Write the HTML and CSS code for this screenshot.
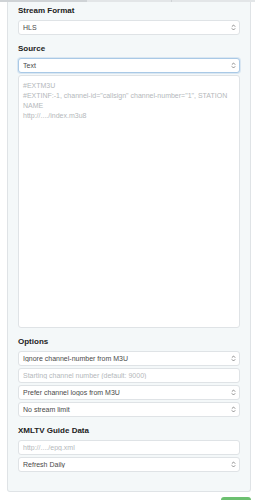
FILE: index.html
```html
<!DOCTYPE html>
<html lang="en">
<head>
    <meta charset="UTF-8">
    <meta name="viewport" content="width=device-width, initial-scale=1.0">
    <title>Source Settings</title>
    <link rel="stylesheet" href="styles.css">
</head>
<body>
    <div class="tabs">
        <span class="tab active"></span>
        <span class="tab"></span>
        <span class="tab last"></span>
    </div>
    <div class="panel">
        <div class="group">
            <label class="label">Stream Format</label>
            <div class="select-wrap">
                <select class="control">
                    <option>HLS</option>
                </select>
                <svg class="caret" viewBox="0 0 6 8"><path d="M1 3 L3 1 L5 3 M1 5 L3 7 L5 5" fill="none" stroke="currentColor" stroke-width="1"/></svg>
            </div>
        </div>
        <div class="group">
            <label class="label">Source</label>
            <div class="select-wrap">
                <select class="control focused">
                    <option>Text</option>
                </select>
                <svg class="caret" viewBox="0 0 6 8"><path d="M1 3 L3 1 L5 3 M1 5 L3 7 L5 5" fill="none" stroke="currentColor" stroke-width="1"/></svg>
            </div>
            <textarea class="control playlist" placeholder="#EXTM3U&#10;#EXTINF:-1, channel-id=&quot;callsign&quot; channel-number=&quot;1&quot;, STATION NAME&#10;http://..../index.m3u8"></textarea>
        </div>
        <div class="group">
            <label class="label">Options</label>
            <div class="select-wrap">
                <select class="control">
                    <option>Ignore channel-number from M3U</option>
                </select>
                <svg class="caret" viewBox="0 0 6 8"><path d="M1 3 L3 1 L5 3 M1 5 L3 7 L5 5" fill="none" stroke="currentColor" stroke-width="1"/></svg>
            </div>
            <input class="control" type="text" placeholder="Starting channel number (default: 9000)">
            <div class="select-wrap">
                <select class="control">
                    <option>Prefer channel logos from M3U</option>
                </select>
                <svg class="caret" viewBox="0 0 6 8"><path d="M1 3 L3 1 L5 3 M1 5 L3 7 L5 5" fill="none" stroke="currentColor" stroke-width="1"/></svg>
            </div>
            <div class="select-wrap">
                <select class="control">
                    <option>No stream limit</option>
                </select>
                <svg class="caret" viewBox="0 0 6 8"><path d="M1 3 L3 1 L5 3 M1 5 L3 7 L5 5" fill="none" stroke="currentColor" stroke-width="1"/></svg>
            </div>
        </div>
        <div class="group">
            <label class="label">XMLTV Guide Data</label>
            <input class="control" type="text" placeholder="http://..../epg.xml">
            <div class="select-wrap">
                <select class="control">
                    <option>Refresh Daily</option>
                </select>
                <svg class="caret" viewBox="0 0 6 8"><path d="M1 3 L3 1 L5 3 M1 5 L3 7 L5 5" fill="none" stroke="currentColor" stroke-width="1"/></svg>
            </div>
        </div>
    </div>
    <div class="footer">
        <button class="save-button"></button>
    </div>
</body>
</html>
```

FILE: styles.css
```css
:root {
    --panel-bg: #f4f8f9;
    --border-color: #dfe3e6;
    --text-color: #4a4a4a;
    --label-color: #222;
    --placeholder: #b4b8bb;
    --focus-color: #a9c9e6;
    --accent-color: #6cc070;
}

body {
    margin: 0;
    background-color: #fff;
    font-family: "Liberation Sans", Arial, sans-serif;
    color: var(--text-color);
}

.tabs {
    display: flex;
    height: 2px;
}

.tab {
    flex: 1;
    background-color: #e3e6e8;
}

.tab.active {
    flex: 0 0 87px;
    background-color: #cfd3d6;
}

.tab.last {
    border-left: 1px solid #cfd3d6;
}

.panel {
    margin: 0 4px 0 7px;
    padding: 3px 10px 19px;
    background-color: var(--panel-bg);
    border: 1px solid var(--border-color);
    border-top: none;
    border-radius: 0 0 3px 3px;
    display: flex;
    flex-direction: column;
    gap: 8px;
}

.group {
    display: flex;
    flex-direction: column;
    gap: 2px;
}

.label {
    display: block;
    font-size: 8px;
    font-weight: bold;
    line-height: 12px;
    color: var(--label-color);
    margin-bottom: 1px;
}

.control {
    display: block;
    box-sizing: border-box;
    width: 100%;
    height: 15px;
    margin: 0;
    padding: 0 4px;
    border: 1px solid var(--border-color);
    border-radius: 3px;
    background-color: #fff;
    font-family: inherit;
    font-size: 7px;
    color: var(--text-color);
    outline: none;
}

select.control {
    appearance: none;
    -webkit-appearance: none;
}

.control::placeholder {
    color: var(--placeholder);
}

.control.focused {
    border-color: var(--focus-color);
    box-shadow: 0 0 0 1px rgba(169, 201, 230, 0.35);
}

.playlist {
    height: 253px;
    padding: 5px 4px;
    line-height: 10px;
    resize: none;
}

.select-wrap {
    position: relative;
}

.caret {
    position: absolute;
    right: 4px;
    top: 4px;
    width: 5px;
    height: 7px;
    color: #777;
}

.footer {
    display: flex;
    justify-content: flex-end;
    padding: 5px 4px 0 0;
}

.save-button {
    width: 30px;
    height: 16px;
    border: none;
    border-radius: 3px;
    background-color: var(--accent-color);
}
```
